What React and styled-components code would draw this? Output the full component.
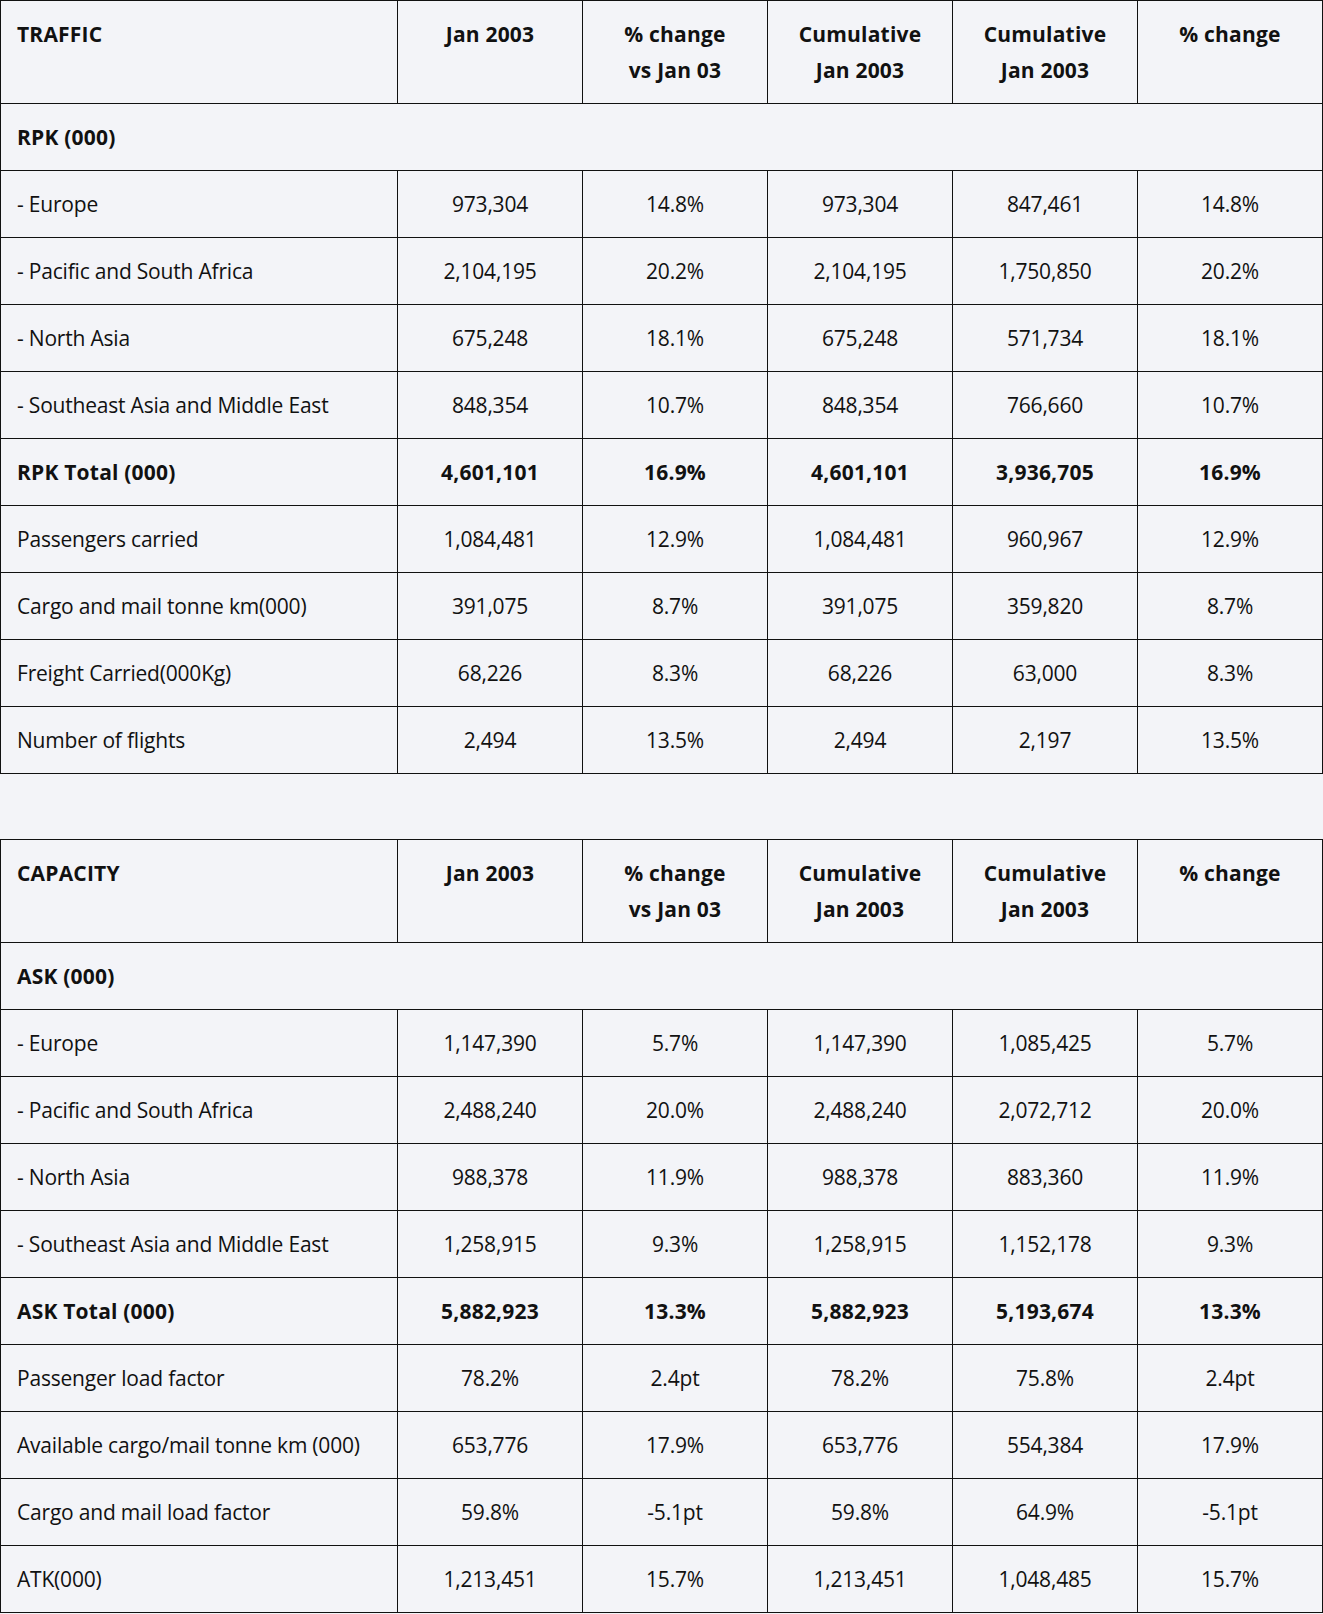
import React from "react";
import styled, { createGlobalStyle } from "styled-components";

const GlobalStyle = createGlobalStyle`
  html, body {
    margin: 0;
    padding: 0;
    background: #f3f4f8;
  }
  body {
    font-family: "Open Sans", "Noto Sans", sans-serif;
    color: #111;
  }
`;

const traffic = {
  title: "TRAFFIC",
  group: "RPK (000)",
  rows: [
    ["- Europe", "973,304", "14.8%", "973,304", "847,461", "14.8%"],
    ["- Pacific and South Africa", "2,104,195", "20.2%", "2,104,195", "1,750,850", "20.2%"],
    ["- North Asia", "675,248", "18.1%", "675,248", "571,734", "18.1%"],
    ["- Southeast Asia and Middle East", "848,354", "10.7%", "848,354", "766,660", "10.7%"],
    ["RPK Total (000)", "4,601,101", "16.9%", "4,601,101", "3,936,705", "16.9%", true],
    ["Passengers carried", "1,084,481", "12.9%", "1,084,481", "960,967", "12.9%"],
    ["Cargo and mail tonne km(000)", "391,075", "8.7%", "391,075", "359,820", "8.7%"],
    ["Freight Carried(000Kg)", "68,226", "8.3%", "68,226", "63,000", "8.3%"],
    ["Number of flights", "2,494", "13.5%", "2,494", "2,197", "13.5%"],
  ],
};

const capacity = {
  title: "CAPACITY",
  group: "ASK (000)",
  rows: [
    ["- Europe", "1,147,390", "5.7%", "1,147,390", "1,085,425", "5.7%"],
    ["- Pacific and South Africa", "2,488,240", "20.0%", "2,488,240", "2,072,712", "20.0%"],
    ["- North Asia", "988,378", "11.9%", "988,378", "883,360", "11.9%"],
    ["- Southeast Asia and Middle East", "1,258,915", "9.3%", "1,258,915", "1,152,178", "9.3%"],
    ["ASK Total (000)", "5,882,923", "13.3%", "5,882,923", "5,193,674", "13.3%", true],
    ["Passenger load factor", "78.2%", "2.4pt", "78.2%", "75.8%", "2.4pt"],
    ["Available cargo/mail tonne km (000)", "653,776", "17.9%", "653,776", "554,384", "17.9%"],
    ["Cargo and mail load factor", "59.8%", "-5.1pt", "59.8%", "64.9%", "-5.1pt"],
    ["ATK(000)", "1,213,451", "15.7%", "1,213,451", "1,048,485", "15.7%"],
  ],
};

const headings = [
  ["Jan 2003"],
  ["% change", "vs Jan 03"],
  ["Cumulative", "Jan 2003"],
  ["Cumulative", "Jan 2003"],
  ["% change"],
];

function StatsTable({ data }) {
  return (
    <Table>
      <colgroup>
        <LabelCol />
        {headings.map((_, i) => (
          <ValueCol key={i} />
        ))}
      </colgroup>
      <thead>
        <tr>
          <Head>{data.title}</Head>
          {headings.map((lines, i) => (
            <Head key={i} $center>
              {lines.map((l, j) => (
                <HeadLine key={j}>{l}</HeadLine>
              ))}
            </Head>
          ))}
        </tr>
      </thead>
      <tbody>
        <tr>
          <Cell colSpan={6} $bold>
            {data.group}
          </Cell>
        </tr>
        {data.rows.map((row) => {
          const bold = row[6] === true;
          return (
            <tr key={row[0]}>
              {row.slice(0, 6).map((v, i) => (
                <Cell key={i} $bold={bold} $center={i > 0}>
                  {v}
                </Cell>
              ))}
            </tr>
          );
        })}
      </tbody>
    </Table>
  );
}

export default function App() {
  return (
    <>
      <GlobalStyle />
      <Page>
        <StatsTable data={traffic} />
        <StatsTable data={capacity} />
      </Page>
    </>
  );
}

const Page = styled.div`
  width: 1323px;
  display: flex;
  flex-direction: column;
  gap: 65px;
`;

const Table = styled.table`
  width: 1323px;
  table-layout: fixed;
  border-collapse: collapse;
  font-size: 21px;
  line-height: 36px;
`;

const LabelCol = styled.col`
  width: 397px;
`;

const ValueCol = styled.col`
  width: 185px;
`;

const Head = styled.th`
  border: 1px solid #111;
  padding: 15px 16px;
  vertical-align: top;
  font-size: 21px;
  font-weight: 700;
  letter-spacing: 0.2px;
  text-align: ${(p) => (p.$center ? "center" : "left")};
`;

const HeadLine = styled.div`
  white-space: nowrap;
`;

const Cell = styled.td`
  border: 1px solid #111;
  padding: 15px 16px;
  vertical-align: middle;
  font-weight: ${(p) => (p.$bold ? 700 : 400)};
  letter-spacing: ${(p) => (p.$bold ? "0.2px" : "-0.2px")};
  text-align: ${(p) => (p.$center ? "center" : "left")};
  white-space: nowrap;
`;
